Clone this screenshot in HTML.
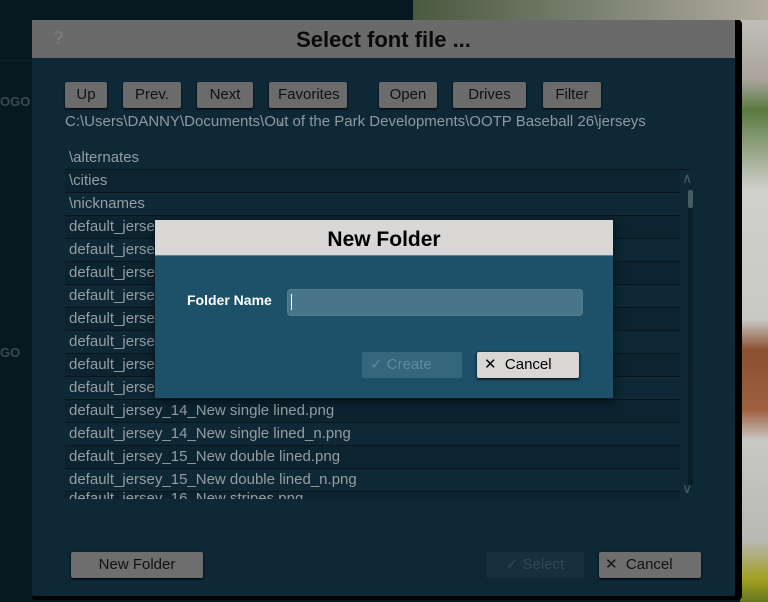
<!DOCTYPE html>
<html><head><meta charset="utf-8"><style>
*{margin:0;padding:0;box-sizing:border-box}
body{width:768px;height:602px;overflow:hidden;position:relative;background:#061820;font-family:"Liberation Sans",sans-serif}
.abs{position:absolute}
.btn{position:absolute;top:82px;height:26px;background:#6b6b6b;color:#111;font-size:15px;text-align:center;line-height:26px;border-radius:2px;box-shadow:0 1px 2px #000}
.row{position:absolute;left:65px;width:615px;height:23px;border-bottom:1px solid #0a161c;color:#959ea2;font-size:15px;line-height:22px;padding-left:4px;white-space:nowrap;overflow:hidden}
</style></head><body>
<div class="abs" style="left:413px;top:0;width:355px;height:20px;background:linear-gradient(90deg,#4a5a40,#7a8070 50%,#b0aca0)"></div>
<div class="abs" style="left:740px;top:20px;width:28px;height:582px;background:linear-gradient(180deg,#c0beb8 0,#a8a49a 60px,#5a7a40 90px,#d0d0cc 170px,#c8c8c4 300px,#8a5030 330px,#a06040 390px,#c8c8c4 420px,#b8b8b4 520px,#a0a020 560px,#305020 602px)"></div>
<div class="abs" style="left:0;top:60px;width:32px;height:1px;background:#0e2028"></div>
<div class="abs" style="left:0;top:94px;color:#3a4a50;font-size:13px;font-weight:bold">OGO</div>
<div class="abs" style="left:0;top:345px;color:#3a4a50;font-size:13px;font-weight:bold">GO</div>
<div class="abs" style="left:32px;top:20px;width:710px;height:580px;background:#000;border-radius:4px"></div>
<div class="abs" style="left:32px;top:20px;width:703px;height:38px;background:#6a6a6a"></div>
<div class="abs" style="left:53px;top:28px;color:#7a7a7a;font-size:18px;font-weight:bold">?</div>
<div class="abs" style="left:32px;top:27px;width:703px;text-align:center;color:#0a0a0a;font-size:22px;font-weight:bold">Select font file ...</div>
<div class="abs" style="left:32px;top:58px;width:703px;height:538px;background:#0e2836"></div>
<div class="btn" style="left:65px;width:42px">Up</div>
<div class="btn" style="left:123px;width:58px">Prev.</div>
<div class="btn" style="left:197px;width:56px">Next</div>
<div class="btn" style="left:269px;width:78px;text-align:left;padding-left:9px">Favorites<span style="color:#888;font-size:9px"> &#8744;</span></div>
<div class="btn" style="left:379px;width:58px">Open</div>
<div class="btn" style="left:453px;width:73px">Drives</div>
<div class="btn" style="left:543px;width:58px">Filter</div>
<div class="abs" style="left:65px;top:113px;color:#8f9aa0;font-size:15px;white-space:nowrap">C:\Users\DANNY\Documents\Out of the Park Developments\OOTP Baseball 26\jerseys</div>
<div class="row" style="top:147px;width:625px;background:#0e2836">\alternates</div>
<div class="row" style="top:170px;background:#0b2430">\cities</div>
<div class="row" style="top:193px;background:#0e2836">\nicknames</div>
<div class="row" style="top:216px;background:#0b2430">default_jersey</div>
<div class="row" style="top:239px;background:#0e2836">default_jersey</div>
<div class="row" style="top:262px;background:#0b2430">default_jersey</div>
<div class="row" style="top:285px;background:#0e2836">default_jersey</div>
<div class="row" style="top:308px;background:#0b2430">default_jersey</div>
<div class="row" style="top:331px;background:#0e2836">default_jersey</div>
<div class="row" style="top:354px;background:#0b2430">default_jersey</div>
<div class="row" style="top:377px;background:#0e2836">default_jersey</div>
<div class="row" style="top:400px;background:#0b2430">default_jersey_14_New single lined.png</div>
<div class="row" style="top:423px;background:#0e2836">default_jersey_14_New single lined_n.png</div>
<div class="row" style="top:446px;background:#0b2430">default_jersey_15_New double lined.png</div>
<div class="row" style="top:469px;background:#0e2836">default_jersey_15_New double lined_n.png</div>
<div class="row" style="top:492px;height:7px;background:#0b2430;line-height:14px;border:0">default_jersey_16_New stripes.png</div>
<div class="abs" style="left:688px;top:190px;width:5px;height:295px;background:#0a1e28"></div>
<div class="abs" style="left:688px;top:190px;width:5px;height:18px;background:#4a5a62;border-radius:2px"></div>
<div class="abs" style="left:682px;top:170px;color:#4a5a62;font-size:14px">&#8743;</div>
<div class="abs" style="left:682px;top:480px;color:#4a5a62;font-size:14px">&#8744;</div>
<div class="abs" style="left:71px;top:552px;width:132px;height:26px;background:#6e6e6e;border-radius:2px;box-shadow:0 1px 2px #000;color:#111;font-size:15px;text-align:center;line-height:26px">New Folder</div>
<div class="abs" style="left:486px;top:552px;width:98px;height:26px;background:#16303c;border-radius:2px;color:#2e4a56;font-size:15px;text-align:center;line-height:26px">&#10003; Select</div>
<div class="abs" style="left:599px;top:552px;width:102px;height:26px;background:#6e6e6e;border-radius:2px;box-shadow:0 1px 2px #000;color:#111;font-size:15px;line-height:26px;padding-left:6px">&#10005;&nbsp; Cancel</div>
<div class="abs" style="left:155px;top:220px;width:458px;height:178px;box-shadow:0 3px 10px rgba(0,0,0,.6);background:#1d5169"></div>
<div class="abs" style="left:155px;top:220px;width:458px;height:36px;background:#d8d7d6;border-bottom:1px solid #5a8090;text-align:center;line-height:40px;font-size:21px;font-weight:bold;color:#000">New Folder</div>
<div class="abs" style="left:187px;top:292px;color:#fff;font-size:14px;font-weight:bold">Folder Name</div>
<div class="abs" style="left:287px;top:289px;width:296px;height:27px;background:#4a7588;border-radius:4px;border:1px solid #557f90"></div>
<div class="abs" style="left:291px;top:294px;width:1px;height:16px;background:#fff"></div>
<div class="abs" style="left:362px;top:352px;width:100px;height:26px;background:#34667c;border-radius:2px;color:#5a8ca2;font-size:15px;line-height:26px;padding-left:8px">&#10003; Create</div>
<div class="abs" style="left:477px;top:352px;width:102px;height:26px;background:#d8d7d6;border-radius:2px;box-shadow:0 1px 3px #000;color:#000;font-size:15px;line-height:26px;padding-left:7px">&#10005;&nbsp; Cancel</div>
</body></html>
